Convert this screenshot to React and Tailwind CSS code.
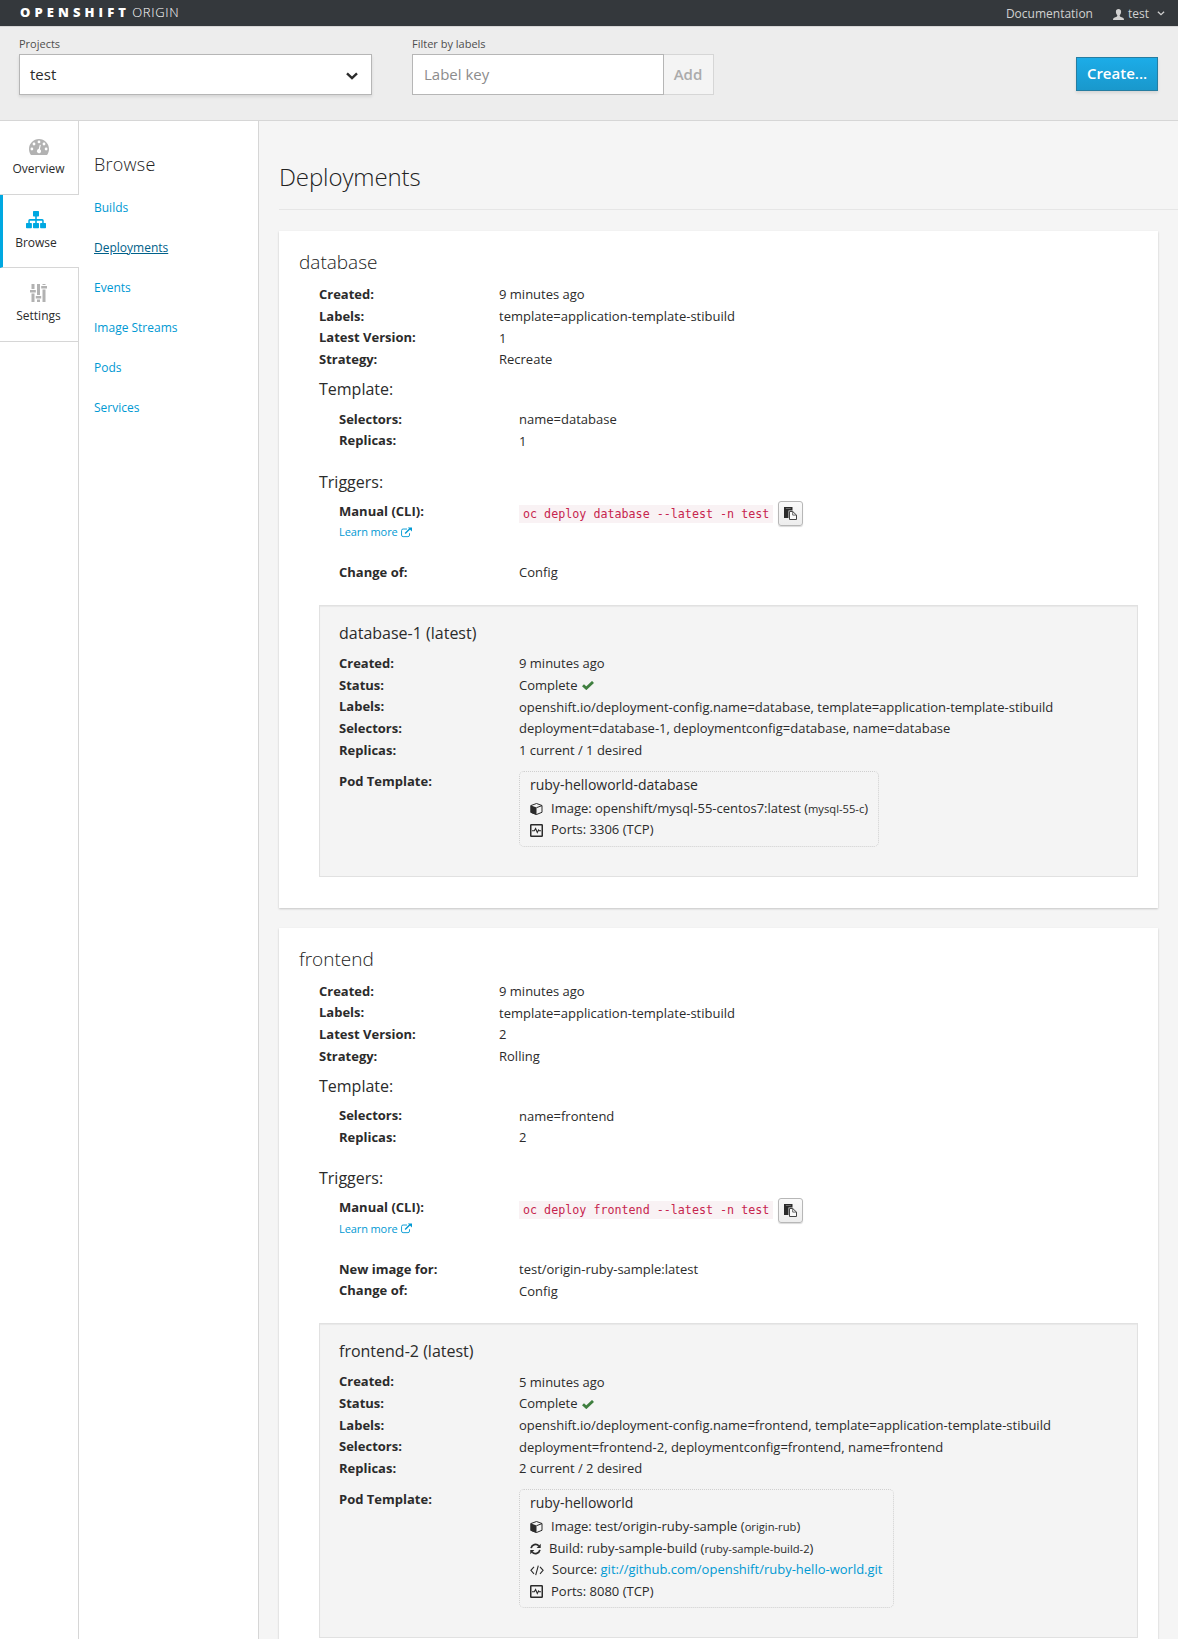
import React from "react";

function Gauge({ className }) {
  return (
    <svg className={className} viewBox="0 0 20 16" fill="currentColor">
      <path
        fillRule="evenodd"
        d="M10 0C4.5 0 0 4.5 0 10c0 1.900.5 3.800 1.600 5.400.2.300.5.600.9.600h15c.4 0 .7-.3.9-.6C19.500 13.800 20 11.900 20 10 20 4.500 15.500 0 10 0zM2.900 8.600a1.400 1.400 0 1 1 0 2.800 1.400 1.400 0 0 1 0-2.800zM5 3.600a1.400 1.400 0 1 1 0 2.800 1.400 1.400 0 0 1 0-2.800zM10 1.500a1.400 1.400 0 1 1 0 2.800 1.400 1.400 0 0 1 0-2.800zM15 3.600a1.400 1.400 0 1 1 0 2.800 1.400 1.400 0 0 1 0-2.800zM17.100 8.600a1.400 1.400 0 1 1 0 2.800 1.400 1.400 0 0 1 0-2.800zM10.800 5.800l1 .3-.9 4.200a2.100 2.100 0 1 1-1.200-.2z"
      />
    </svg>
  );
}

function Sitemap({ className }) {
  return (
    <svg className={className} viewBox="0 0 20 18" fill="currentColor">
      <path d="M7.700 0h4.600q.7 0 .7.700v4q0 .7-.7.700h-1.500v2.700h5.400q1.500 0 1.500 1.500v2.300h1.600q.7 0 .7.700v4q0 .7-.7.700h-4.500q-.7 0-.7-.7v-4q0-.7.700-.7h1.400V9.700h-5.400v2.200h1.500q.7 0 .7.700v4q0 .7-.7.700H7.700q-.7 0-.7-.7v-4q0-.7.7-.7h1.500V9.700H3.800v2.200h1.400q.7 0 .7.700v4q0 .7-.7.700H.7q-.7 0-.7-.7v-4q0-.7.7-.7h1.600V9.600q0-1.500 1.500-1.500h5.400V5.400H7.700Q7 5.400 7 4.700v-4Q7 0 7.700 0z" />
    </svg>
  );
}

function Sliders({ className }) {
  return (
    <svg className={className} viewBox="0 0 17 18" fill="currentColor">
      <path d="M1.500 0h3v5h-3zM0 6h5.800v2.500H0zM1.500 9.500h3V18h-3zM7 0h3v11H7zM5.800 12h5.400v2.500H5.800zM7 15.500h3V18H7zM12.500 0h3v1h-3zM11.200 2H17v2.500h-5.800zM12.500 5.500h3V18h-3z" />
    </svg>
  );
}

function ExternalLink({ className }) {
  return (
    <svg className={className} viewBox="0 0 12 11" fill="none" stroke="currentColor">
      <path d="M6.600 1.700H2.300Q.6 1.700.6 3.400v4.900q0 1.700 1.700 1.700h5.300q1.700 0 1.700-1.700V6.300" />
      <path d="M4.500 6.600l5.200-5.200" strokeWidth="1.500" />
      <path d="M7.500 0H12v4.500z" fill="currentColor" stroke="none" />
    </svg>
  );
}

function Check({ className }) {
  return (
    <svg className={className} viewBox="0 0 12 9" fill="none" stroke="currentColor" strokeWidth="2.900">
      <path d="M1 4.200l3.300 3L11 1" />
    </svg>
  );
}

function Cube({ className }) {
  return (
    <svg className={className} viewBox="0 0 13 12">
      <path d="M6.500.5l5.500 2v6.800l-5.500 2.200L1 9.300V2.500z" fill="none" stroke="currentColor" />
      <path d="M.5 2.300l6 2.300V12l-6-2.300z" fill="currentColor" />
      <path d="M6.500 4.700L12 2.600" fill="none" stroke="currentColor" />
    </svg>
  );
}

function Monitor({ className }) {
  return (
    <svg className={className} viewBox="0 0 13 13" fill="none" stroke="currentColor">
      <rect x=".75" y=".75" width="11.500" height="11.500" rx=".6" strokeWidth="1.500" />
      <path d="M2 6.800h2.300l1.300-2.300 1.700 4 1.300-2.500.7.800H11" strokeWidth="1.100" />
    </svg>
  );
}

function Refresh({ className }) {
  return (
    <svg className={className} viewBox="0 0 12 12" fill="none" stroke="currentColor" strokeWidth="1.900">
      <path d="M1.200 5A4.900 4.900 0 0 1 9.600 2.600" />
      <path d="M10.800 7a4.900 4.900 0 0 1-8.400 2.400" />
      <path d="M11.700.4v4.500H7.200zM.3 11.600V7.100h4.500z" fill="currentColor" stroke="none" />
    </svg>
  );
}

function Code({ className }) {
  return (
    <svg className={className} viewBox="0 0 14 11" fill="none" stroke="currentColor" strokeWidth="1.100">
      <path d="M4 1.800L.9 5.300 4 8.800M10 1.800l3.100 3.500L10 8.800M8.300.6L5.700 10.200" />
    </svg>
  );
}

function Paste({ className }) {
  return (
    <svg className={className} viewBox="0 0 13 13">
      <path d="M0 0h8.500v3.500H4.500V11H0z" fill="currentColor" />
      <path d="M1.800 1.500h5" stroke="#8a8a8a" strokeWidth=".7" />
      <path d="M5.500 4.500h3.200l3.800 3.600v4.400h-7z" fill="#fafafa" stroke="#444" />
      <path d="M8.700 4.500v3.600h3.800" fill="none" stroke="#444" strokeWidth=".8" />
    </svg>
  );
}

function Person({ className }) {
  return (
    <svg className={className} viewBox="0 0 11 11" fill="currentColor">
      <path d="M5.500 0C3.900 0 2.900 1 2.900 2.700c0 1.500.6 2.800 1.400 3.500 0 1-.3 1.400-1.300 1.700C1 8.500 0 9 0 11h11c0-2-1-2.500-3-3.100-1-.3-1.300-.7-1.300-1.700.8-.7 1.400-2 1.400-3.500C8.100 1 7.100 0 5.500 0z" />
    </svg>
  );
}

function Chevron({ className, width }) {
  return (
    <svg className={className} viewBox="0 0 12 8" fill="none" stroke="currentColor" strokeWidth={width}>
      <path d="M1 1.300l5 4.700 5-4.700" />
    </svg>
  );
}

function Row({ label, children }) {
  return (
    <div className="flex h-[21.670px]">
      <dt className="w-[180px] shrink-0 font-bold">{label}</dt>
      <dd className="pt-[0.400px] whitespace-nowrap">{children}</dd>
    </div>
  );
}

function NavItem({ icon, label, active }) {
  return (
    <a
      className={
        active
          ? "flex h-[73px] w-[79px] flex-col items-center border-b border-l-3 border-b-[#d6d6d6] border-l-[#00a8e1] bg-white pt-4 pr-2.5"
          : "flex h-[74px] w-[79px] flex-col items-center border-r border-b border-[#d6d6d6] bg-white pt-4 pr-[1px]"
      }
    >
      <span className="flex h-[18px] items-end">{icon}</span>
      <span className="mt-1 text-[12px] leading-5">{label}</span>
    </a>
  );
}

function PodLine({ icon, children }) {
  return (
    <div className="flex h-[21.670px] items-center whitespace-pre">
      {icon}
      <span>{children}</span>
    </div>
  );
}

function Deployment({ name, version, strategy, replicas, triggers, age, pod }) {
  return (
    <section className="mb-5 h-fit w-[879px] bg-white px-5 pt-[17px] pb-[31px] shadow-[0_1px_2px_rgba(0,0,0,0.200)]">
      <h2 className="h-9 text-[19px] leading-[29px] font-light text-[#222]">{name}</h2>
      <div className="pl-5">
        <dl>
          <Row label="Created:">9 minutes ago</Row>
          <Row label="Labels:">template=application-template-stibuild</Row>
          <Row label="Latest Version:">{version}</Row>
          <Row label="Strategy:">{strategy}</Row>
        </dl>
        <h3 className="mt-[7.300px] text-base leading-[22px]">Template:</h3>
        <dl className="mt-[8.700px] pl-5">
          <Row label="Selectors:">name={name}</Row>
          <Row label="Replicas:">{replicas}</Row>
        </dl>
        <h3 className="mt-[18.600px] text-base leading-[22px]">Triggers:</h3>
        <div className="mt-[8.200px] flex h-[61.200px] pl-5">
          <div className="w-[180px] shrink-0">
            <div className="font-bold">Manual (CLI):</div>
            <a className="flex items-center text-[11px] leading-[19.500px] tracking-[-0.100px] text-[#0099d3]">
              Learn more
              <ExternalLink className="ml-[3px] h-[11px] w-[11px]" />
            </a>
          </div>
          <div className="mt-[0.400px] flex h-[25px] items-center">
            <code className="h-[18px] w-[254px] bg-[#f9f2f4] px-1 font-['DejaVu_Sans_Mono'] text-[11.700px] leading-[18px] whitespace-nowrap text-[#c7254e]">
              oc deploy {name} --latest -n test
            </code>
            <button className="ml-[5px] flex h-[25px] w-[25px] items-center justify-center rounded-[3px] border border-[#b7b7b7] bg-linear-to-b from-[#fafafa] to-[#ededed] pr-px shadow-[0_1px_1px_rgba(0,0,0,0.150)]">
              <Paste className="h-[13px] w-[13px]" />
            </button>
          </div>
        </div>
        <dl className="pl-5">
          {triggers.map(([label, value]) => (
            <Row key={label} label={label}>
              {value}
            </Row>
          ))}
        </dl>
        <div className="mt-[21.600px] w-[819px] border border-[#e1e1e1] bg-[#f4f4f4] px-[19px] pt-[16px] pb-[29px] shadow-[inset_0_1px_1px_rgba(0,0,0,0.050)]">
          <h3 className="text-base leading-[22px]">
            {name}-{version} (latest)
          </h3>
          <dl className="mt-[8.900px]">
            <Row label="Created:">{age}</Row>
            <Row label="Status:">
              <span className="flex items-center">
                Complete
                <Check className="ml-[4px] h-[9px] w-3 text-[#3f7f3f]" />
              </span>
            </Row>
            <Row label="Labels:">
              openshift.io/deployment-config.name={name}, template=application-template-stibuild
            </Row>
            <Row label="Selectors:">
              deployment={name}-{version}, deploymentconfig={name}, name={name}
            </Row>
            <Row label="Replicas:">
              {replicas} current / {replicas} desired
            </Row>
          </dl>
          <div className="mt-[9.500px] flex">
            <div className="w-[180px] shrink-0 font-bold">Pod Template:</div>
            <div className="w-fit rounded-[5px] border border-dotted border-[#cfcfcf] px-2.5 pt-[2px] pb-[4.500px]">
              <div className="h-6 text-sm leading-[22px]">{pod.name}</div>
              {pod.lines}
            </div>
          </div>
        </div>
      </div>
    </section>
  );
}

const iconText = "mr-2 h-3 w-[13px] shrink-0";

const deployments = [
  {
    name: "database",
    version: 1,
    strategy: "Recreate",
    replicas: 1,
    age: "9 minutes ago",
    triggers: [["Change of:", "Config"]],
    pod: {
      name: "ruby-helloworld-database",
      lines: (
        <>
          <PodLine icon={<Cube className={iconText} />}>
            Image: openshift/mysql-55-centos7:latest (<small className="text-[11.200px]">mysql-55-c</small>)
          </PodLine>
          <PodLine icon={<Monitor className="mr-2 h-[13px] w-[13px] shrink-0" />}>Ports: 3306 (TCP)</PodLine>
        </>
      ),
    },
  },
  {
    name: "frontend",
    version: 2,
    strategy: "Rolling",
    replicas: 2,
    age: "5 minutes ago",
    triggers: [
      ["New image for:", "test/origin-ruby-sample:latest"],
      ["Change of:", "Config"],
    ],
    pod: {
      name: "ruby-helloworld",
      lines: (
        <>
          <PodLine icon={<Cube className={iconText} />}>
            Image: test/origin-ruby-sample (<small className="text-[11.200px]">origin-rub</small>)
          </PodLine>
          <PodLine icon={<Refresh className="mr-2 h-3 w-[11px] shrink-0" />}>
            Build: ruby-sample-build (<small className="text-[11.200px]">ruby-sample-build-2</small>)
          </PodLine>
          <PodLine icon={<Code className="mr-2 h-[11px] w-[14px] shrink-0" />}>
            Source: <a className="text-[#0099d3]">git://github.com/openshift/ruby-hello-world.git</a>
          </PodLine>
          <PodLine icon={<Monitor className="mr-2 h-[13px] w-[13px] shrink-0" />}>Ports: 8080 (TCP)</PodLine>
        </>
      ),
    },
  },
];

const links = ["Builds", "Deployments", "Events", "Image Streams", "Pods", "Services"];

export default function App() {
  return (
    <div className="flex h-[1639px] w-[1178px] flex-col overflow-hidden bg-[#f5f5f5] font-['Open_Sans',sans-serif] text-[13px] leading-[21.670px] text-[#2b2b2b]">
      <nav className="flex h-[26px] shrink-0 items-center justify-between bg-[#34383c] pr-[13px] pl-5 text-[#d1d1d1]">
        <div className="flex pt-[0.500px] text-white">
          <span className="text-[13px] font-extrabold tracking-[4.100px]">OPENSHIFT</span>
          <span className="ml-[2px] text-[13px] font-light tracking-[0.700px]">ORIGIN</span>
        </div>
        <div className="flex items-center text-[12px]">
          <span className="mt-px">Documentation</span>
          <Person className="mt-[3px] mr-1 ml-5 h-[11px] w-[11px]" />
          <span className="mt-px">test</span>
          <Chevron className="mt-[2px] ml-2 h-[5px] w-2" width="2" />
        </div>
      </nav>

      <header className="flex h-[95px] shrink-0 items-start border-t border-b border-[#d6d6d6] bg-[#ededed] pl-[19px]">
        <div className="w-[393px]">
          <div className="pt-[6px] text-[11px] leading-[21px] text-[#4d4d4d]">Projects</div>
          <div className="flex h-[41px] w-[353px] items-center justify-between border border-[#b6b6b6] bg-white pr-[13px] pl-2.5 text-[15px] shadow-[0_2px_3px_rgba(0,0,0,0.100)]">
            test
            <Chevron className="mt-[2px] h-2 w-3" width="2.400" />
          </div>
        </div>
        <div>
          <div className="pt-[6px] text-[11px] leading-[21px] text-[#4d4d4d]">Filter by labels</div>
          <div className="flex h-[41px] text-[15px]">
            <div className="flex w-[252px] items-center border border-[#b6b6b6] bg-white pl-[11px] text-[#8c8c8c]">
              Label key
            </div>
            <div className="flex w-[50px] items-center justify-center border border-l-0 border-[#d6d6d6] bg-[#f4f4f4] pr-px font-semibold text-[#ababab]">
              Add
            </div>
          </div>
        </div>
        <button className="mt-[30px] mr-5 ml-auto h-[34px] w-[82px] border border-[#267da1] bg-linear-to-b from-[#1cace8] to-[#1998cc] text-[15px] font-semibold text-white shadow-[0_2px_3px_rgba(0,0,0,0.100)]">
          Create...
        </button>
      </header>

      <div className="flex min-h-0 grow">
        <aside className="w-[79px] shrink-0 border-r border-[#d6d6d6] bg-white">
          <NavItem label="Overview" icon={<Gauge className="h-4 w-5 text-[#b2b2b2]" />} />
          <NavItem label="Browse" active icon={<Sitemap className="h-[18px] w-5 text-[#00a8e1]" />} />
          <NavItem label="Settings" icon={<Sliders className="h-[18px] w-[17px] text-[#b2b2b2]" />} />
        </aside>
        <aside className="w-[180px] shrink-0 border-r border-[#d6d6d6] bg-white pt-[29px] pl-[15px]">
          <h2 className="text-[18px] leading-7 font-light tracking-[0.250px] text-[#222]">Browse</h2>
          <ul className="mt-[10px]">
            {links.map((l) => (
              <li key={l} className="h-10 text-[12px] leading-10">
                <a className={l === "Deployments" ? "text-[#00618a] underline" : "text-[#0099d3]"}>{l}</a>
              </li>
            ))}
          </ul>
        </aside>
        <main className="min-w-0 grow pl-5">
          <h1 className="mb-[21px] h-[89px] border-b border-[#e6e6e6] pt-[39px] text-[24px] leading-[33px] font-light tracking-[-0.100px] text-[#222]">
            Deployments
          </h1>
          {deployments.map((d) => (
            <Deployment key={d.name} {...d} />
          ))}
        </main>
      </div>
    </div>
  );
}
